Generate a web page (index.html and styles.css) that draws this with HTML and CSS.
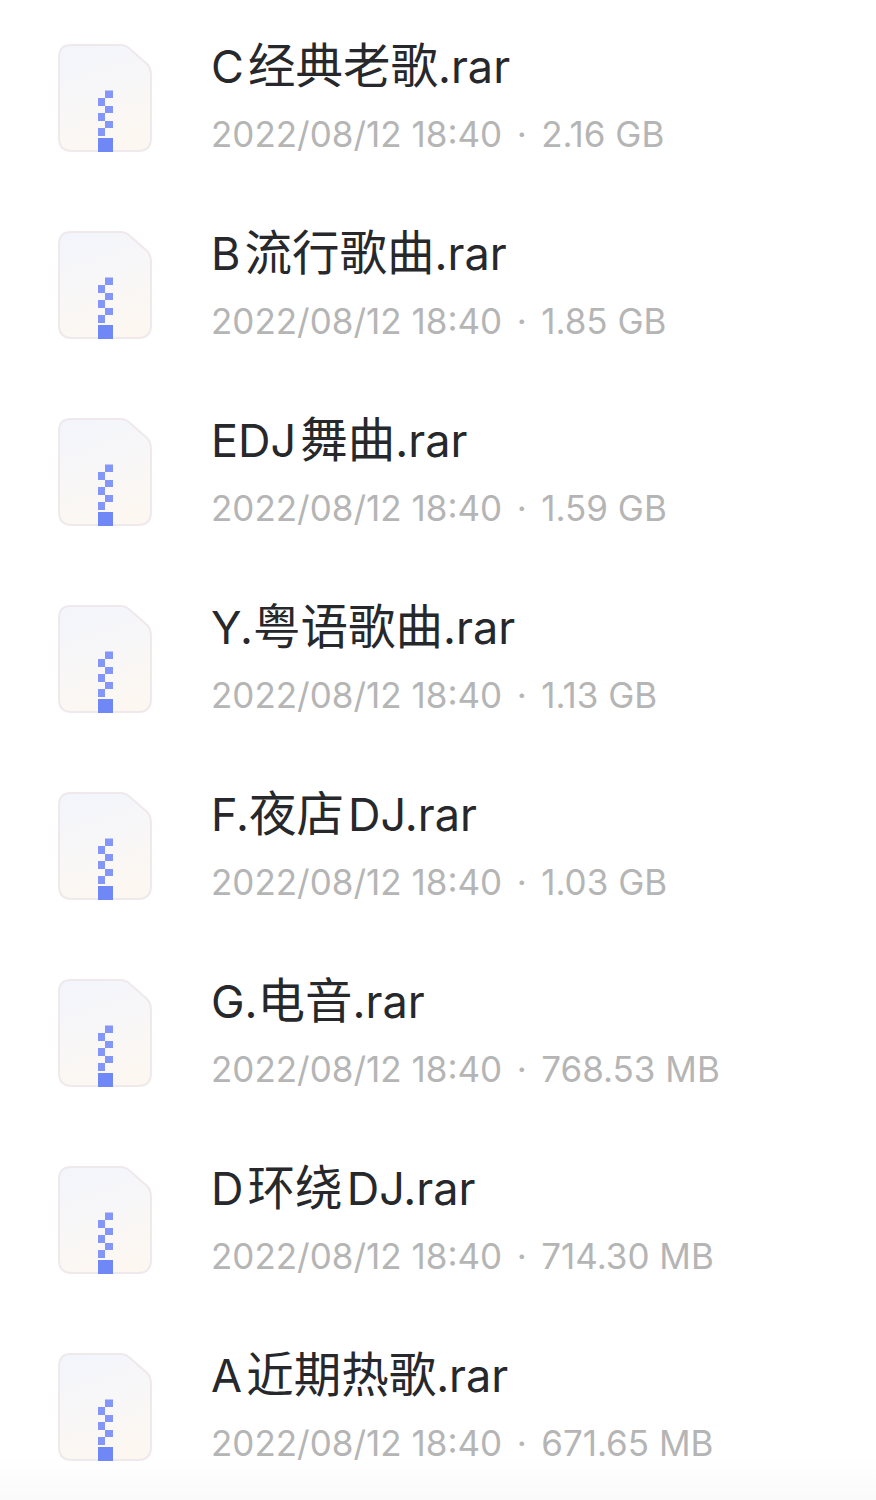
FILE: index.html
```html
<!DOCTYPE html>
<html lang="zh-CN">
<head>
    <meta charset="UTF-8">
    <meta name="viewport" content="width=device-width, initial-scale=1.0">
    <title>Files</title>
    <link rel="stylesheet" href="styles.css">
</head>
<body>
    <svg class="icon-defs" width="0" height="0">
        <defs>
            <linearGradient id="paper" x1="0.1" y1="0" x2="0.4" y2="1">
                <stop offset="0" stop-color="#f3f5fc"/>
                <stop offset="0.5" stop-color="#f8f7f8"/>
                <stop offset="1" stop-color="#fcf7f1"/>
            </linearGradient>
            <symbol id="zip" viewBox="0 0 94 108">
                <path d="M13 1H62Q68 1 72 5L89 20Q93 24 93 31V94Q93 107 80 107H14Q1 107 1 94V13Q1 1 13 1Z" fill="url(#paper)" stroke="#efe9ec" stroke-width="2"/>
                <g fill="#8497f8">
                    <rect x="47" y="46.500" width="8" height="7.500"/>
                    <rect x="40" y="54" width="7" height="8"/>
                    <rect x="47" y="62" width="8" height="7"/>
                    <rect x="40" y="69" width="7" height="8"/>
                    <rect x="47" y="77" width="8" height="7"/>
                    <rect x="40" y="84" width="7" height="8"/>
                </g>
                <rect x="40" y="94" width="15" height="14" fill="#7088f5"/>
            </symbol>
        </defs>
    </svg>

    <ul class="file-list">
        <li class="file-row">
            <svg class="file-icon"><use href="#zip"/></svg>
            <div class="file-info">
                <div class="file-name">C&hairsp;<span class="cjk">经典老歌</span>.rar</div>
                <div class="file-meta"><span>2022/08/12 18:40</span><span class="dot">·</span><span>2.16 GB</span></div>
            </div>
        </li>
        <li class="file-row">
            <svg class="file-icon"><use href="#zip"/></svg>
            <div class="file-info">
                <div class="file-name">B&hairsp;<span class="cjk">流行歌曲</span>.rar</div>
                <div class="file-meta"><span>2022/08/12 18:40</span><span class="dot">·</span><span>1.85 GB</span></div>
            </div>
        </li>
        <li class="file-row">
            <svg class="file-icon"><use href="#zip"/></svg>
            <div class="file-info">
                <div class="file-name">EDJ&hairsp;<span class="cjk">舞曲</span>.rar</div>
                <div class="file-meta"><span>2022/08/12 18:40</span><span class="dot">·</span><span>1.59 GB</span></div>
            </div>
        </li>
        <li class="file-row">
            <svg class="file-icon"><use href="#zip"/></svg>
            <div class="file-info">
                <div class="file-name">Y.<span class="cjk">粤语歌曲</span>.rar</div>
                <div class="file-meta"><span>2022/08/12 18:40</span><span class="dot">·</span><span>1.13 GB</span></div>
            </div>
        </li>
        <li class="file-row">
            <svg class="file-icon"><use href="#zip"/></svg>
            <div class="file-info">
                <div class="file-name">F.<span class="cjk">夜店</span>&hairsp;DJ.rar</div>
                <div class="file-meta"><span>2022/08/12 18:40</span><span class="dot">·</span><span>1.03 GB</span></div>
            </div>
        </li>
        <li class="file-row">
            <svg class="file-icon"><use href="#zip"/></svg>
            <div class="file-info">
                <div class="file-name">G.<span class="cjk">电音</span>.rar</div>
                <div class="file-meta"><span>2022/08/12 18:40</span><span class="dot">·</span><span>768.53 MB</span></div>
            </div>
        </li>
        <li class="file-row">
            <svg class="file-icon"><use href="#zip"/></svg>
            <div class="file-info">
                <div class="file-name">D&hairsp;<span class="cjk">环绕</span>&hairsp;DJ.rar</div>
                <div class="file-meta"><span>2022/08/12 18:40</span><span class="dot">·</span><span>714.30 MB</span></div>
            </div>
        </li>
        <li class="file-row">
            <svg class="file-icon"><use href="#zip"/></svg>
            <div class="file-info">
                <div class="file-name">A&hairsp;<span class="cjk">近期热歌</span>.rar</div>
                <div class="file-meta"><span>2022/08/12 18:40</span><span class="dot">·</span><span>671.65 MB</span></div>
            </div>
        </li>
    </ul>
</body>
</html>
```

FILE: styles.css
```css
html {
    height: 100%;
}
body {
    margin: 0;
    height: 1500px;
    overflow: hidden;
    font-family: Inter, "Noto Sans CJK SC", sans-serif;
    background: linear-gradient(to bottom, #ffffff 1455px, #fafafa 1500px);
}
.icon-defs {
    display: block;
    height: 0;
}
.file-list {
    list-style: none;
    margin: 0;
    padding: 44px 0 0 58px;
}
.file-row {
    display: flex;
    gap: 59px;
    height: 187px;
}
.file-icon {
    width: 94px;
    height: 108px;
    flex-shrink: 0;
}
.file-info {
    margin-top: -8px;
}
.file-name {
    font-size: 45px;
    line-height: 62px;
    color: #27282b;
    text-autospace: no-autospace;
}
.cjk {
    font-size: 47.5px;
    line-height: 1;
}
.file-meta {
    display: flex;
    margin-top: 13px;
    font-size: 35px;
    line-height: 46px;
    color: #b5b5b5;
}
.dot {
    width: 39px;
    text-align: center;
}
```
